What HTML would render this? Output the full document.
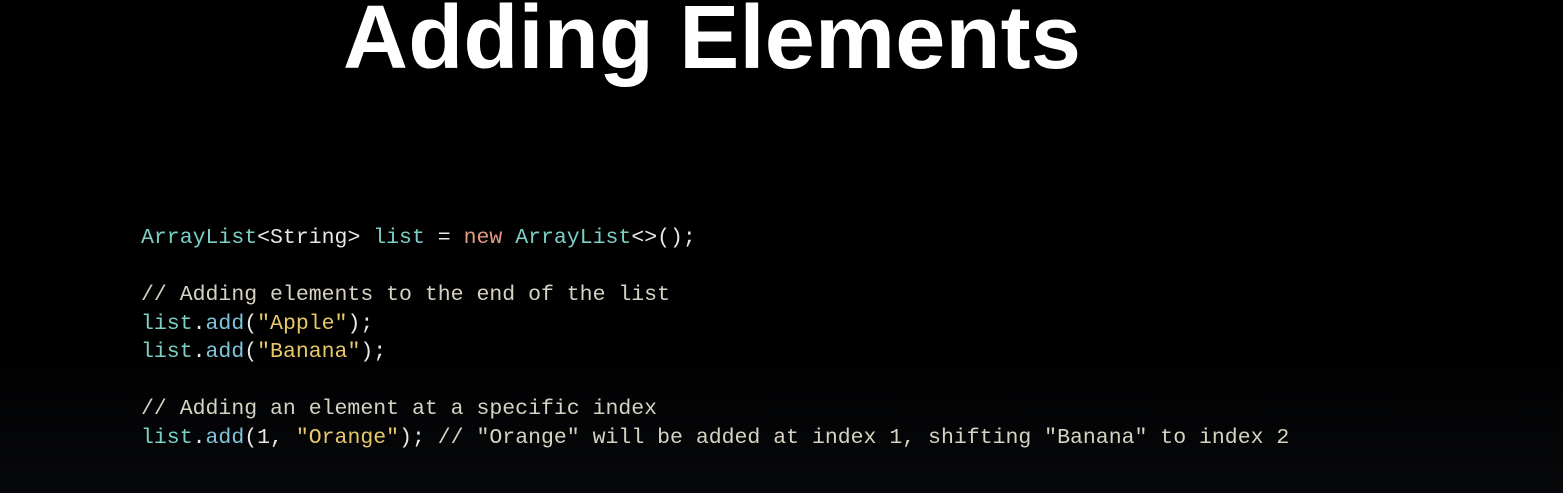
<!DOCTYPE html>
<html><head><meta charset="utf-8"><style>
html,body{margin:0;padding:0;background:#000;}
body{width:1563px;height:493px;overflow:hidden;position:relative;background:linear-gradient(#000 0%,#000 70%,#07080b 100%);}
.t{position:absolute;left:343px;top:-7px;font:bold 90px/90px "Liberation Sans",sans-serif;color:#fff;white-space:nowrap;letter-spacing:0.2px}
pre{position:absolute;left:141px;top:224px;margin:0;font:21.5px/28.5px "Liberation Mono",monospace;color:#e8e8e8;}
.c{color:#d6d3c2}.a{color:#7ccfc6}.f{color:#7fc4d8}.s{color:#e8c96a}.k{color:#e39c83}
</style></head><body>
<div class="t">Adding Elements</div>
<pre><span class="a">ArrayList</span>&lt;String&gt; <span class="a">list</span> = <span class="k">new</span> <span class="a">ArrayList</span>&lt;&gt;();

<span class="c">// Adding elements to the end of the list</span>
<span class="a">list</span>.<span class="f">add</span>(<span class="s">"Apple"</span>);
<span class="a">list</span>.<span class="f">add</span>(<span class="s">"Banana"</span>);

<span class="c">// Adding an element at a specific index</span>
<span class="a">list</span>.<span class="f">add</span>(1, <span class="s">"Orange"</span>); <span class="c">// "Orange" will be added at index 1, shifting "Banana" to index 2</span></pre>
</body></html>
